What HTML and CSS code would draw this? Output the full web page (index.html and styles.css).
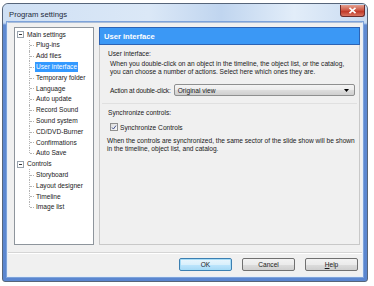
FILE: index.html
```html
<!DOCTYPE html>
<html>
<head>
<meta charset="utf-8">
<link rel="stylesheet" href="styles.css">
</head>
<body>
<div class="window">
  <div class="titlebar">
    <span class="title">Program settings</span>
    <div class="close"><svg width="9" height="7" viewBox="0 0 9 7"><path d="M1.5 0.8 L7.5 6.2 M7.5 0.8 L1.5 6.2" stroke="#fff" stroke-width="1.6"/></svg></div>
  </div>
  <div class="client">
    <div class="main">
      <div class="tree">
        <div class="node"><span class="box"></span><span class="label">Main settings</span></div>
        <div class="children">
          <div class="leaf"><span class="label">Plug-ins</span></div>
          <div class="leaf"><span class="label">Add files</span></div>
          <div class="leaf"><span class="label sel">User interface</span></div>
          <div class="leaf"><span class="label">Temporary folder</span></div>
          <div class="leaf"><span class="label">Language</span></div>
          <div class="leaf"><span class="label">Auto update</span></div>
          <div class="leaf"><span class="label">Record Sound</span></div>
          <div class="leaf"><span class="label">Sound system</span></div>
          <div class="leaf"><span class="label">CD/DVD-Burner</span></div>
          <div class="leaf"><span class="label">Confirmations</span></div>
          <div class="leaf last"><span class="label">Auto Save</span></div>
        </div>
        <div class="node"><span class="box"></span><span class="label">Controls</span></div>
        <div class="children">
          <div class="leaf"><span class="label">Storyboard</span></div>
          <div class="leaf"><span class="label">Layout designer</span></div>
          <div class="leaf"><span class="label">Timeline</span></div>
          <div class="leaf last"><span class="label">Image list</span></div>
        </div>
      </div>
      <div class="panel">
        <div class="header">User interface</div>
        <div class="section">
          <div class="heading">User interface:</div>
          <p class="desc">When you double-click on an object in the timeline, the object list, or the catalog,<br>you can choose a number of actions. Select here which ones they are.</p>
          <div class="row">
            <span class="rowlabel">Action at double-click:</span>
            <div class="combo"><span>Original view</span><svg width="5" height="3" viewBox="0 0 5 3"><path d="M0 0 H5 L2.5 3 Z" fill="#000"/></svg></div>
          </div>
        </div>
        <div class="section second">
          <div class="heading">Synchronize controls:</div>
          <div class="check"><span class="cb"><svg width="7" height="7" viewBox="0 0 7 7"><path d="M1.2 3.5 L2.8 5.3 L5.8 1.3" stroke="#3a4a8a" stroke-width="1.1" fill="none"/></svg></span><span>Synchronize Controls</span></div>
          <p class="desc2">When the controls are synchronized, the same sector of the slide show will be shown<br>in the timeline, object list, and catalog.</p>
        </div>
      </div>
    </div>
    <div class="sep"></div>
    <div class="buttons">
      <div class="btn default">OK</div>
      <div class="btn">Cancel</div>
      <div class="btn"><u>H</u>elp</div>
    </div>
  </div>
</div>
</body>
</html>
```

FILE: styles.css
```css
*, *::before, *::after {
  box-sizing: border-box;
}
html, body {
  margin: 0;
  padding: 0;
  background: #ffffff;
}
body {
  font-family: "Liberation Sans", Arial, sans-serif;
  font-size: 6.6px;
  color: #1a1a1a;
}
.window {
  margin: 3px 0 0 2px;
  width: 366px;
  height: 279px;
  border: 1px solid #56657a;
  border-radius: 6px 6px 3px 3px;
  background: linear-gradient(to bottom, #d7e6f6 0px, #c4d8f0 19px, #5f8ad2 21px, #5a86d0 100%);
  padding: 0 4px 4px 4px;
  display: flex;
  flex-direction: column;
}
.titlebar {
  height: 18px;
  flex: none;
  display: flex;
  align-items: flex-start;
  justify-content: space-between;
  background: linear-gradient(to right, #cfe0f4 0%, #dbe8f7 40%, #c0d5ef 60%, #e2edf9 80%, #c9dbf1 100%);
  margin: 0 -4px;
  padding: 0 2px 0 6px;
  border-radius: 6px 6px 0 0;
}
.title {
  font-family: "Liberation Sans", Arial, sans-serif;
  font-size: 7.7px;
  color: #1e2a3a;
  margin-top: 6px;
}
.close {
  width: 25px;
  height: 12px;
  margin-top: 1px;
  border: 1px solid #6a2b2b;
  border-top: none;
  border-radius: 0 0 3px 3px;
  background: linear-gradient(to bottom, #e4a08f 0%, #cf5b48 45%, #c13a29 60%, #d97561 100%);
  display: flex;
  align-items: center;
  justify-content: center;
}
.client {
  flex: 1;
  background: #f0f0f0;
  border: 1px solid #e6eef8;
  border-top-color: #a9bdd8;
  box-shadow: 0 0 0 1px #7ea3da;
  display: flex;
  flex-direction: column;
  padding: 4px 3px 0 6px;
}
.main {
  display: flex;
  gap: 5px;
  height: 218px;
  flex: none;
}
.tree {
  width: 80px;
  flex: none;
  background: #ffffff;
  border: 1px solid #8e959c;
  padding-top: 1px;
}
.node, .leaf {
  height: 10.8px;
  display: flex;
  align-items: center;
  position: relative;
  white-space: nowrap;
}
.node {
  padding-left: 11px;
}
.box {
  position: absolute;
  left: 2px;
  top: 2.4px;
  width: 7px;
  height: 7px;
  border: 1px solid #98a2ac;
  background: #fff;
}
.box::after {
  content: "";
  position: absolute;
  left: 1px;
  top: 2px;
  width: 3px;
  height: 1px;
  background: #333;
}
.children {
  position: relative;
}
.leaf {
  padding-left: 20px;
}
.leaf::before {
  content: "";
  position: absolute;
  left: 14px;
  top: 0;
  height: 100%;
  border-left: 1px dotted #b4b4b4;
}
.leaf.last::before {
  height: 50%;
}
.leaf::after {
  content: "";
  position: absolute;
  left: 15px;
  top: 50%;
  width: 4px;
  border-top: 1px dotted #b4b4b4;
}
.label {
  padding: 1px 1px;
  line-height: 7.5px;
}
.label.sel {
  background: #3399ff;
  color: #ffffff;
}
.panel {
  flex: 1;
  border: 1px solid #c8c8c8;
  border-top: none;
  display: flex;
  flex-direction: column;
  background: #f0f0f0;
}
.header {
  height: 18px;
  flex: none;
  background: #3b98f5;
  border: 1px solid #2c63b4;
  color: #ffffff;
  font-weight: bold;
  font-size: 7.6px;
  display: flex;
  align-items: center;
  padding-left: 4px;
  margin: 0 -1px;
}
.section {
  padding: 5px 4px 0 8px;
}
.heading {
  line-height: 8px;
}
.desc {
  margin: 2px 0 0 2px;
  line-height: 8px;
  white-space: nowrap;
}
.row {
  display: flex;
  align-items: center;
  margin: 8px 0 0 2px;
}
.rowlabel {
  flex: none;
  white-space: nowrap;
  letter-spacing: -0.15px;
  margin-right: 3px;
}
.combo {
  flex: 1;
  height: 12px;
  border: 1px solid #8e8f8f;
  border-radius: 2px;
  background: linear-gradient(to bottom, #f4f4f4 0%, #ebebeb 50%, #dddddd 51%, #cfcfcf 100%);
  display: flex;
  align-items: center;
  justify-content: space-between;
  padding: 0 5px 0 3px;
}
.section.second {
  border-top: 1px solid #e0e0e0;
  margin: 7px 2px 0 2px;
  padding: 5px 2px 0 6px;
}
.check {
  display: flex;
  align-items: center;
  margin: 6px 0 0 2px;
  gap: 2px;
}
.cb {
  width: 8px;
  height: 8px;
  border: 1px solid #8f8f8f;
  background: linear-gradient(135deg, #dcdcdc, #fbfbfb);
  display: flex;
}
.desc2 {
  margin: 6px 0 0 -1px;
  line-height: 8px;
  white-space: nowrap;
}
.sep {
  flex: none;
  margin: 7px -3px 0 -6px;
  border-top: 1px solid #d5d5d5;
  border-bottom: 1px solid #ffffff;
  height: 2px;
}
.buttons {
  display: flex;
  justify-content: flex-end;
  gap: 10px;
  margin-top: 4px;
  padding-right: 1px;
}
.btn {
  width: 53px;
  height: 13px;
  border: 1px solid #707070;
  border-radius: 2px;
  background: linear-gradient(to bottom, #f2f2f2 0%, #ebebeb 50%, #dddddd 51%, #cfcfcf 100%);
  display: flex;
  align-items: center;
  justify-content: center;
}
.btn.default {
  border-color: #3c7fb1;
  box-shadow: inset 0 0 0 1px #a6dcf7;
  background: linear-gradient(to bottom, #eaf6fd 0%, #d9f0fc 50%, #bee6fd 51%, #a7d9f5 100%);
}
u {
  text-decoration: underline;
}
```
